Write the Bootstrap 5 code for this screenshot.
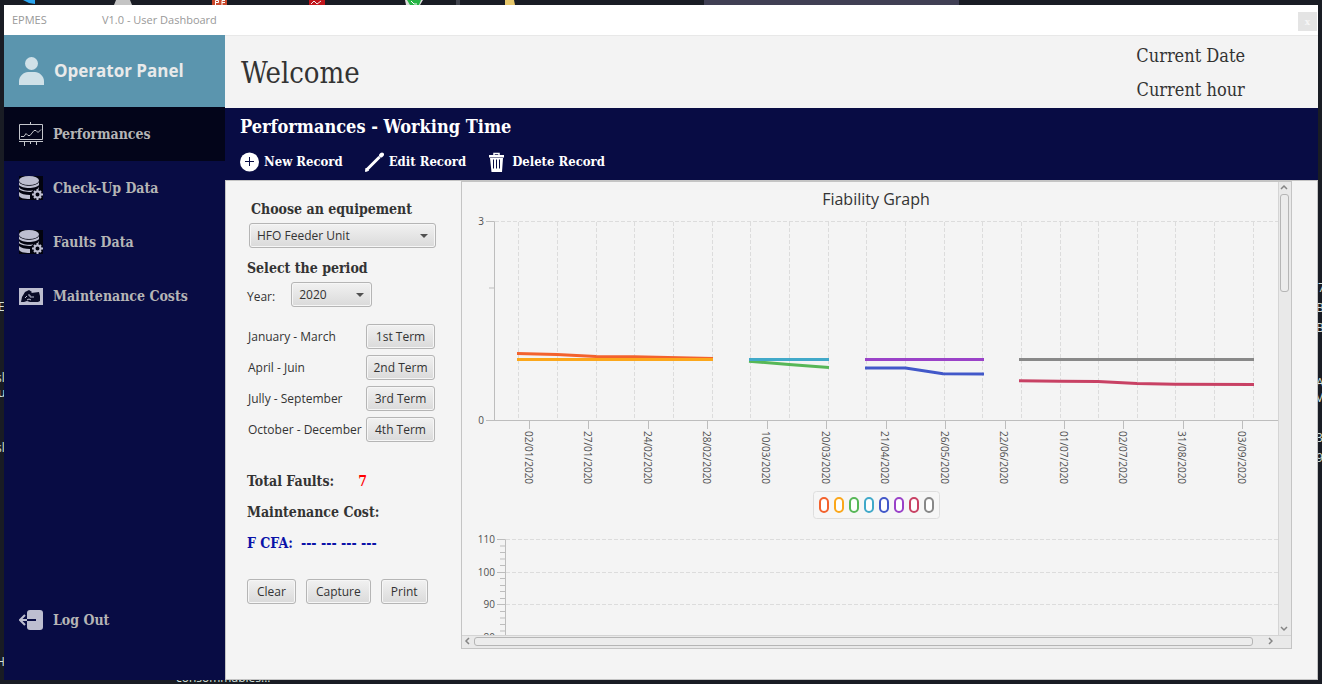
<!DOCTYPE html>
<html lang="en">
<head>
<meta charset="utf-8">
<meta name="viewport" content="width=device-width, initial-scale=1">
<title>EPMES - User Dashboard</title>
<link href="https://cdn.jsdelivr.net/npm/bootstrap@5.3.0/dist/css/bootstrap.min.css" rel="stylesheet">
<style>
  :root { --navy: #080c44; --serif: "DejaVu Serif Condensed", "DejaVu Serif", serif; --panel: #f4f4f4; --line: #c4c4c4; }
  body { background: #191c24; font-family: "Open Sans", "Noto Sans", sans-serif; font-size: 12px; line-height: 18px; color: #333; padding: 5px 4px 4px; overflow: hidden; }
  .desk-top { height: 5px; width: 100%; }
  .desk-text { color: #d4e0dc; font-size: 12px; line-height: 14px; white-space: nowrap; }
  .desk-text span { position: absolute; }
  .app { min-height: calc(100vh - 9px); z-index: 1; }
  .titlebar { height: 30px; background: #fff; color: #999; font-size: 11px; padding: 0 1px 0 8px; }
  .titlebar .product { width: 90px; }
  .close-btn { width: 19px; height: 19px; background: #e4e4e4; color: #f6f6f6; font: bold 10px/15px var(--serif); margin-top: 3px; }
  .sidebar { width: 221px; background: var(--navy); }
  .operator { height: 72px; background: #5b95ae; color: #e9eaea; font-size: 17px; font-weight: 700; padding-left: 15px; gap: 10px; }
  .side-link { height: 54px; padding: 0 0 0 15px; gap: 10px; color: #b5b5b5; font: bold 14px/18px var(--serif); text-decoration: none; }
  .side-link:hover { color: #fff; }
  .side-link.active { background: #03051a; }
  .side-link svg { width: 24px; height: 24px; flex: none; }
  .logout { margin-bottom: 33px; }
  .page-head { height: 73px; background: #f3f3f3; border-top: 1px solid #e8e8e8; font-family: var(--serif); padding: 2px 73px 0 16px; }
  .page-head h1 { font-size: 29px; line-height: 36px; }
  .clock { font-size: 18px; line-height: 34px; }
  .toolbar { height: 72px; background: var(--navy); color: #fff; font-family: var(--serif); padding: 8px 15px; gap: 14px; }
  .toolbar h2 { font-size: 18px; line-height: 22px; }
  .tool-btn { color: #fff; font: bold 13px/20px var(--serif); gap: 5px; }
  .tool-btn svg { width: 19px; height: 20px; flex: none; }
  .tools { gap: 22px; }
  .work { background: var(--panel); border: 1px solid var(--line); padding-right: 25px; padding-bottom: 30px; }
  .filters { width: 235px; padding: 18px 0 0 21px; }
  .head-label { font: bold 14px/20px var(--serif); }
  .period { margin-top: 10px; }
  .fx { height: 25px; padding: 0 9px; border: 1px solid #b5b5b5; border-radius: 3px; background-color: #e4e4e4; background-image: linear-gradient(#f1f1f1, #dadada); color: #333; font-size: 12px; line-height: 22px; box-shadow: inset 0 0 0 1px #f6f6f6; }
  .fx-select { --arrow: url("data:image/svg+xml,%3Csvg xmlns='http://www.w3.org/2000/svg' viewBox='0 0 8 4'%3E%3Cpath d='M0 0h8L4 4z' fill='%23505050'/%3E%3C/svg%3E"); padding: 0 24px 0 7px; background-image: var(--arrow), linear-gradient(#f1f1f1, #dadada); background-size: 8px 4px, 100% 100%; background-position: right 7px center, 0 0; background-repeat: no-repeat; }
  .fx-equip { width: 187px; margin-left: 2px; }
  .fx-year { width: 81px; }
  .terms { margin-top: 17px; gap: 6px; }
  .term-name { width: 119px; padding-left: 1px; }
  .term-btn { width: 69px; padding: 0; }
  .totals { margin-top: 29px; gap: 11px; }
  .faults { color: #f00; }
  .cfa { color: #0a12a8; }
  .actions { margin-top: 26px; gap: 10px; }
  .pane { border: 1px solid var(--line); }
  .view { min-height: 453px; }
  .vbar { width: 13px; background: #e9e9e9; border-left: 1px solid #d4d4d4; padding: 2px 2px 3px 0; }
  .hbar { height: 13px; background: #e9e9e9; border-top: 1px solid #d4d4d4; padding: 0 2px 2px; gap: 4px; }
  .hbar .thumb { height: 9px; flex: 1; }
  .vbar .thumb { width: 9px; height: 98px; margin-top: 4px; }
  .thumb { border: 1px solid #b5b5b5; border-radius: 3px; background: #ececec; }
  .arrow { fill: none; stroke: #858585; stroke-width: 1.5; flex: none; }
  .plot text { font-family: "Open Sans", "Noto Sans", sans-serif; font-size: 10px; fill: #505050; }
  .plot .title { font-size: 16px; fill: #333; }
  .plot .grid { fill: none; stroke: #dcdcdc; stroke-dasharray: 4 2; }
  .plot .axis { fill: none; stroke: #bdbdbd; }
  .plot .series { fill: none; stroke-width: 3; }
</style>
</head>
<body>

<!-- desktop behind the window -->
<svg class="desk-top position-absolute top-0 start-0" viewBox="0 0 1322 5" preserveAspectRatio="none" aria-hidden="true">
  <path d="M23 0h12v4l-6-1z" fill="#2ba5f0"/><path d="M116 0h14l2 5h-18z" fill="#c4c4c4"/>
  <path d="M212 0h15v5h-15z" fill="#c9482b"/><path d="M215.500 5V.5h3v2h-3M222 5V.5h3M222 2.500h3" stroke="#fff" fill="none"/>
  <path d="M309 0h16v5h-16z" fill="#c1151b"/><path d="M311 4l3-3 3 3 4-3" stroke="#eee" fill="none"/>
  <path d="M405 0h18l-3 5h-14z" fill="#ddd"/><path d="M407 0h14l-2 5h-9z" fill="#25b544"/><path d="M411 1l3 3h3" stroke="#fff" fill="none"/>
  <path d="M456 0h4v5h-4z" fill="#40434d"/><path d="M505 0h9l1 5h-10z" fill="#e6c76b"/>
  <path d="M704 0h255v5H704z" fill="#403f54"/>
</svg>
<div class="desk-text position-absolute top-0 start-0 w-100 h-100 overflow-hidden" aria-hidden="true">
  <span style="left:-2px;top:300px">E</span><span style="left:-4px;top:371px">sl</span><span style="left:-2px;top:386px">u</span>
  <span style="left:-4px;top:441px">sl</span><span style="left:-4px;top:655px">H</span>
  <span style="left:176px;top:671px">consommables...</span>
  <span style="left:1318px;top:281px">7</span><span style="left:1316px;top:301px">B</span><span style="left:1316px;top:321px">B</span>
  <span style="left:1316px;top:376px">A</span><span style="left:1316px;top:391px">V</span><span style="left:1316px;top:431px">3</span><span style="left:1316px;top:451px">9</span>
</div>

<div class="app position-relative d-flex flex-column">
  <header class="titlebar d-flex align-items-center">
    <span class="product">EPMES</span><span>V1.0 - User Dashboard</span>
    <button type="button" class="close-btn border-0 p-0 ms-auto" aria-label="Close">x</button>
  </header>

  <div class="d-flex flex-grow-1">
    <nav class="sidebar d-flex flex-column flex-shrink-0">
      <div class="operator d-flex align-items-center">
        <svg width="25" height="28" viewBox="0 0 25 28" fill="#d0e1e8"><circle cx="12.500" cy="6.500" r="6.500"/><path d="M0 28v-4c0-5 5-9 9-9h7c4 0 9 4 9 9v4z"/></svg>
        Operator Panel
      </div>
      <a class="side-link active d-flex align-items-center" href="#">
        <svg viewBox="0 0 24 24" fill="none" stroke="#c4c6cc"><path d="M.5 2.500h23v15H.5zM11.500 0v2M0 19.500h24M5.500 20v4M11.500 20v2M17.500 20v3M2 14.500h3l2-3 2 2h2l4-5h2l2 2 3-3"/></svg>Performances</a>
      <a class="side-link d-flex align-items-center" href="#">
        <svg viewBox="0 0 24 24"><path fill="#02030f" d="M0 0h24v24H0z"/><g fill="#bdbed0"><ellipse cx="10" cy="4.500" rx="10" ry="4.500"/><path d="M0 6c3 5 17 5 20 0v3c-3 4-17 4-20 0zM0 11c3 5 17 5 20 0v2l-5 1-3 2c-5 0-11-1-12-3zM0 16c2 2 6 3 11 3v4c-6 0-11-1-11-4z"/></g><circle cx="18.500" cy="18.500" r="6" fill="#02030f"/><circle cx="18.500" cy="18.500" r="3" fill="none" stroke="#bdbed0" stroke-width="2"/><path stroke="#bdbed0" stroke-width="2" d="M18.500 13v2M18.500 22v2M13 18.500h2M22 18.500h2M15 15l1 1M21 21l1 1M22 15l-1 1M16 21l-1 1"/></svg>Check-Up Data</a>
      <a class="side-link d-flex align-items-center" href="#">
        <svg viewBox="0 0 24 24"><path fill="#02030f" d="M0 0h24v24H0z"/><g fill="#bdbed0"><ellipse cx="10" cy="4.500" rx="10" ry="4.500"/><path d="M0 6c3 5 17 5 20 0v3c-3 4-17 4-20 0zM0 11c3 5 17 5 20 0v2l-5 1-3 2c-5 0-11-1-12-3zM0 16c2 2 6 3 11 3v4c-6 0-11-1-11-4z"/></g><circle cx="18.500" cy="18.500" r="6" fill="#02030f"/><circle cx="18.500" cy="18.500" r="3" fill="none" stroke="#bdbed0" stroke-width="2"/><path stroke="#bdbed0" stroke-width="2" d="M18.500 13v2M18.500 22v2M13 18.500h2M22 18.500h2M15 15l1 1M21 21l1 1M22 15l-1 1M16 21l-1 1"/></svg>Faults Data</a>
      <a class="side-link d-flex align-items-center" href="#">
        <svg viewBox="0 0 24 24"><path fill="#bdbed0" d="M0 4h24v17H0z"/><path fill="#090b26" d="M2 18l1-5 3-5 4-2 3 2-1 1 8-1 1 4v5l-2 1h-8l-3-1-3 1z"/><path fill="none" stroke="#bdbed0" d="M6 14l2-2M9 11h2v2h4M8 16l2-1 2 1"/></svg>Maintenance Costs</a>
      <a class="side-link logout mt-auto d-flex align-items-center" href="#">
        <svg viewBox="0 0 24 24"><rect x="8" y="2" width="16" height="20" rx="3" fill="#bdbed0"/><path d="M8 12h9" stroke="#080c44" stroke-width="2"/><path d="M8 12H1M6 7l-5 5 5 5" fill="none" stroke="#bdbed0" stroke-width="2"/></svg>Log Out</a>
    </nav>

    <main class="d-flex flex-column flex-grow-1">
      <div class="page-head d-flex align-items-center justify-content-between">
        <h1 class="m-0 fw-normal">Welcome</h1>
        <div class="clock text-center"><div>Current Date</div><div>Current hour</div></div>
      </div>
      <div class="toolbar d-flex flex-column">
        <h2 class="m-0 fw-bold">Performances - Working Time</h2>
        <div class="tools d-flex">
          <button type="button" class="tool-btn btn border-0 p-0 d-flex align-items-center"><svg viewBox="0 0 19 20"><circle cx="9.500" cy="10" r="9.500" fill="#fff"/><path d="M9.500 5v9M5 9.500h9" stroke="#080c44"/></svg>New Record</button>
          <button type="button" class="tool-btn btn border-0 p-0 d-flex align-items-center"><svg viewBox="0 0 19 20" fill="none" stroke="#fff"><path stroke-width="3" d="M2 17.500L14.500 5"/><path stroke-width="4" stroke-linecap="round" d="M16 3.500l1-1"/><path fill="#fff" d="M1 16l2.500 2.500L.5 19.500z"/></svg>Edit Record</button>
          <button type="button" class="tool-btn btn border-0 p-0 d-flex align-items-center"><svg viewBox="0 0 19 20"><path fill="none" stroke="#fff" stroke-width="1.500" d="M6 4V1.500h5V4"/><path fill="#fff" d="M1 3h15v2.500H1zM2 6h13l-1 14H3.500z"/><path stroke="#080c44" d="M5.500 7.500v9M8.500 7.500v9M11.500 7.500v9"/></svg>Delete Record</button>
        </div>
      </div>

      <div class="work d-flex flex-grow-1">
        <form class="filters flex-shrink-0">
          <label class="head-label d-block ms-1" for="equip">Choose an equipement</label>
          <select id="equip" class="form-select fx fx-select fx-equip mt-1"><option>HFO Feeder Unit</option></select>
          <div class="head-label period">Select the period</div>
          <div class="d-flex align-items-center mt-1">
            <label class="me-3 pt-1" for="year">Year:</label>
            <select id="year" class="form-select fx fx-select fx-year"><option>2020</option></select>
          </div>
          <div class="terms d-flex flex-column">
            <div class="d-flex align-items-center"><span class="term-name">January - March</span><button type="button" class="btn fx term-btn">1st Term</button></div>
            <div class="d-flex align-items-center"><span class="term-name">April - Juin</span><button type="button" class="btn fx term-btn">2nd Term</button></div>
            <div class="d-flex align-items-center"><span class="term-name">Jully - September</span><button type="button" class="btn fx term-btn">3rd Term</button></div>
            <div class="d-flex align-items-center"><span class="term-name">October - December</span><button type="button" class="btn fx term-btn">4th Term</button></div>
          </div>
          <div class="totals head-label d-flex flex-column">
            <div class="d-flex gap-4"><span>Total Faults:</span><span class="faults">7</span></div>
            <div>Maintenance Cost:</div>
            <div class="cfa d-flex gap-2"><span>F CFA:</span><span>--- --- --- ---</span></div>
          </div>
          <div class="actions d-flex">
            <button type="reset" class="btn fx">Clear</button>
            <button type="button" class="btn fx">Capture</button>
            <button type="button" class="btn fx">Print</button>
          </div>
        </form>

        <section class="pane d-flex flex-column flex-grow-1">
          <div class="d-flex flex-grow-1">
            <div class="view flex-grow-1 overflow-hidden">
              <svg class="plot d-block" width="816" height="453" viewBox="462 182 816 453" role="img" aria-label="Fiability Graph">
                <text class="title" x="876" y="205" text-anchor="middle">Fiability Graph</text>
                <path class="grid" d="M495 221.500h783M518.500 222v198M557.500 222v198M596.500 222v198M634.500 222v198M673.500 222v198M712.500 222v198M750.500 222v198M789.500 222v198M828.500 222v198M866.500 222v198M905.500 222v198M944.500 222v198M982.500 222v198M1021.500 222v198M1060.500 222v198M1098.500 222v198M1137.500 222v198M1175.500 222v198M1214.500 222v198M1253.500 222v198"/>
                <path class="axis" d="M486 221.500h8.500v199M489 288h5M486 420.500h792M529.500 421v8M588.500 421v8M648.500 421v8M707.500 421v8M767.500 421v8M826.500 421v8M886.500 421v8M945.500 421v8M1005.500 421v8M1064.500 421v8M1123.500 421v8M1183.500 421v8M1242.500 421v8"/>
                <text x="484" y="225" text-anchor="end">3</text><text x="484" y="424" text-anchor="end">0</text>
                <g>
                  <text transform="translate(525 431) rotate(90)">02/01/2020</text><text transform="translate(584 431) rotate(90)">27/01/2020</text>
                  <text transform="translate(644 431) rotate(90)">24/02/2020</text><text transform="translate(703 431) rotate(90)">28/02/2020</text>
                  <text transform="translate(762 431) rotate(90)">10/03/2020</text><text transform="translate(822 431) rotate(90)">20/03/2020</text>
                  <text transform="translate(881 431) rotate(90)">21/04/2020</text><text transform="translate(941 431) rotate(90)">26/05/2020</text>
                  <text transform="translate(1000 431) rotate(90)">22/06/2020</text><text transform="translate(1060 431) rotate(90)">01/07/2020</text>
                  <text transform="translate(1119 431) rotate(90)">02/07/2020</text><text transform="translate(1178 431) rotate(90)">31/08/2020</text>
                  <text transform="translate(1238 431) rotate(90)">03/09/2020</text>
                </g>
                <g class="series">
                  <path stroke="#f3622d" d="M517 353.500l40 1 39 2 38 .3 79 1.700"/><path stroke="#fba71b" d="M517 359.500h196"/>
                  <path stroke="#57b757" d="M749 361.200l40 3.300 40 3"/><path stroke="#41a9c9" d="M749 359.500h80"/>
                  <path stroke="#4258c9" d="M865 368h40.500l37.500 5.800 41 .2"/><path stroke="#9a42c8" d="M865 359.500h119"/>
                  <path stroke="#c84164" d="M1019 380.700l41 .5 38 .3 39 2 38 .8 79 .2"/><path stroke="#888" d="M1019 359.500h235"/>
                </g>
                <rect x="813.500" y="491.500" width="126" height="27" rx="3" fill="#f6f6f6" stroke="#dedede"/>
                <g fill="#fff" stroke-width="2">
                  <rect x="820" y="498" width="8" height="14" rx="4" stroke="#f3622d"/><rect x="835" y="498" width="8" height="14" rx="4" stroke="#fba71b"/>
                  <rect x="850" y="498" width="8" height="14" rx="4" stroke="#57b757"/><rect x="865" y="498" width="8" height="14" rx="4" stroke="#41a9c9"/>
                  <rect x="880" y="498" width="8" height="14" rx="4" stroke="#4258c9"/><rect x="895" y="498" width="8" height="14" rx="4" stroke="#9a42c8"/>
                  <rect x="910" y="498" width="8" height="14" rx="4" stroke="#c84164"/><rect x="925" y="498" width="8" height="14" rx="4" stroke="#888"/>
                </g>
                <path class="grid" d="M506 539.500h772M506 572.500h772M506 604.500h772"/>
                <path class="axis" d="M497 539.500h8.500V635M497 572.500h8M497 604.500h8M500 546h5M500 552.500h5M500 559h5M500 565.500h5M500 578.500h5M500 585.500h5M500 591.500h5M500 598.500h5M500 611.500h5M500 618h5M500 624.500h5M500 631h5"/>
                <text x="495" y="543" text-anchor="end">110</text><text x="495" y="576" text-anchor="end">100</text><text x="495" y="608" text-anchor="end">90</text><text x="495" y="641" text-anchor="end">80</text>
              </svg>
            </div>
            <div class="vbar d-flex flex-column align-items-center">
              <svg class="arrow" width="8" height="6" viewBox="0 0 8 6"><path d="M1 5l3-3 3 3"/></svg>
              <div class="thumb"></div>
              <svg class="arrow mt-auto" width="8" height="6" viewBox="0 0 8 6"><path d="M1 1l3 3 3-3"/></svg>
            </div>
          </div>
          <div class="hbar d-flex align-items-center">
            <svg class="arrow" width="6" height="8" viewBox="0 0 6 8"><path d="M5 1L2 4l3 3"/></svg>
            <div class="thumb"></div>
            <svg class="arrow ms-2 me-3" width="8" height="8" viewBox="0 0 8 8"><path d="M4 1l3 3-3 3"/></svg>
          </div>
        </section>
      </div>
    </main>
  </div>
</div>
<script src="https://cdn.jsdelivr.net/npm/bootstrap@5.3.0/dist/js/bootstrap.bundle.min.js"></script>
</body>
</html>
